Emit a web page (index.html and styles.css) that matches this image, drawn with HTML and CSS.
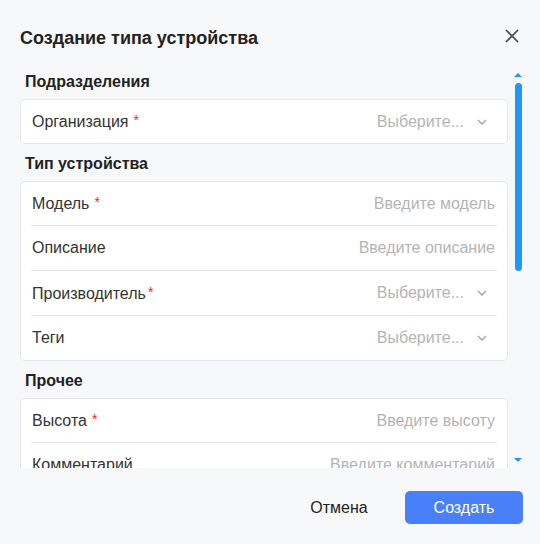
FILE: index.html
```html
<!DOCTYPE html>
<html lang="ru">
<head>
    <meta charset="UTF-8">
    <meta name="viewport" content="width=device-width, initial-scale=1.0">
    <title>Создание типа устройства</title>
    <link rel="stylesheet" href="styles.css">
</head>
<body>
    <div class="modal">
        <div class="modalHeader">
            <h1 class="modalTitle">Создание типа устройства</h1>
            <button class="closeButton" aria-label="Закрыть">
                <svg width="14" height="14" viewBox="0 0 14 14">
                    <path d="M1 1 L13 13 M13 1 L1 13" stroke="#4a4a4a" stroke-width="1.7" fill="none"/>
                </svg>
            </button>
        </div>

        <div class="modalBody">
            <div class="formScroll">
                <div class="section">
                    <div class="sectionTitle">Подразделения</div>
                    <div class="card">
                        <div class="row">
                            <span class="label">Организация<span class="required">*</span></span>
                            <span class="select">
                                <span class="placeholder">Выберите...</span>
                                <svg class="chevron" width="10" height="6" viewBox="0 0 10 6">
                                    <path d="M1 1 L5 5 L9 1" stroke="#a0a0a0" stroke-width="1.3" fill="none"/>
                                </svg>
                            </span>
                        </div>
                    </div>
                </div>

                <div class="section">
                    <div class="sectionTitle">Тип устройства</div>
                    <div class="card">
                        <div class="row">
                            <span class="label">Модель<span class="required">*</span></span>
                            <span class="placeholder">Введите модель</span>
                        </div>
                        <div class="row">
                            <span class="label">Описание</span>
                            <span class="placeholder">Введите описание</span>
                        </div>
                        <div class="row">
                            <span class="label">Производитель<span class="required tight">*</span></span>
                            <span class="select">
                                <span class="placeholder">Выберите...</span>
                                <svg class="chevron" width="10" height="6" viewBox="0 0 10 6">
                                    <path d="M1 1 L5 5 L9 1" stroke="#a0a0a0" stroke-width="1.3" fill="none"/>
                                </svg>
                            </span>
                        </div>
                        <div class="row">
                            <span class="label">Теги</span>
                            <span class="select">
                                <span class="placeholder">Выберите...</span>
                                <svg class="chevron" width="10" height="6" viewBox="0 0 10 6">
                                    <path d="M1 1 L5 5 L9 1" stroke="#a0a0a0" stroke-width="1.3" fill="none"/>
                                </svg>
                            </span>
                        </div>
                    </div>
                </div>

                <div class="section">
                    <div class="sectionTitle">Прочее</div>
                    <div class="card">
                        <div class="row">
                            <span class="label">Высота<span class="required">*</span></span>
                            <span class="placeholder">Введите высоту</span>
                        </div>
                        <div class="row">
                            <span class="label">Комментарий</span>
                            <span class="placeholder">Введите комментарий</span>
                        </div>
                    </div>
                </div>
            </div>

            <div class="scrollbar">
                <div class="arrowUp"></div>
                <div class="thumb"></div>
                <div class="arrowDown"></div>
            </div>
        </div>

        <div class="modalFooter">
            <button class="button cancelButton">Отмена</button>
            <button class="button createButton">Создать</button>
        </div>
    </div>
</body>
</html>
```

FILE: styles.css
```css
body {
    margin: 0;
    padding: 0;
    background-color: #f7f8fa;
    font-family: "Liberation Sans", Arial, sans-serif;
    color: #333;
}
.modal {
    width: 540px;
    height: 544px;
    display: flex;
    flex-direction: column;
    background-color: #f7f8fa;
}
.modalHeader {
    display: flex;
    justify-content: space-between;
    align-items: center;
    height: 62px;
    padding: 0 20px 0 20px;
    box-sizing: border-box;
}
.modalTitle {
    margin: 0;
    margin-top: 13px;
    font-size: 18px;
    line-height: 24px;
    font-weight: bold;
    color: #222;
}
.closeButton {
    border: none;
    background: none;
    padding: 0;
    margin-top: 9px;
    margin-right: 1px;
    width: 14px;
    height: 14px;
    cursor: pointer;
}
.modalBody {
    display: flex;
    height: 406px;
    overflow: hidden;
}
.formScroll {
    flex: 1;
    padding: 10px 6px 0 20px;
    overflow: hidden;
}
.section {
    margin-top: 10px;
}
.section:first-child {
    margin-top: 0;
}
.sectionTitle {
    font-size: 16px;
    line-height: 20px;
    font-weight: bold;
    color: #222;
    padding-left: 5px;
    margin-bottom: 7px;
}
.card {
    background-color: #fff;
    border: 1px solid #e6e7ea;
    border-radius: 5px;
}
.row {
    display: flex;
    justify-content: space-between;
    align-items: center;
    height: 44px;
    margin: 0 10px;
    border-top: 1px solid #e6e6e6;
    font-size: 16px;
}
.row:first-child {
    border-top: none;
    height: 43px;
}
.label {
    color: #333;
    padding-left: 1px;
}
.required {
    color: #f5222d;
    margin-left: 5px;
    font-size: 14px;
    vertical-align: 2px;
}
.required.tight {
    margin-left: 2px;
}
.placeholder {
    color: #b4b4b4;
    padding-right: 2px;
}
.select {
    display: flex;
    align-items: center;
    padding-right: 10px;
}
.select .placeholder {
    padding-right: 0;
}
.chevron {
    margin-left: 13px;
}
.scrollbar {
    width: 8px;
    margin-right: 18px;
    padding: 11px 0 3px 0;
    display: flex;
    flex-direction: column;
    align-items: center;
}
.arrowUp {
    width: 0;
    height: 0;
    border-left: 4px solid transparent;
    border-right: 4px solid transparent;
    border-bottom: 4px solid #2196f3;
}
.thumb {
    width: 7px;
    height: 188px;
    margin-top: 6px;
    background-color: #2196f3;
    border-radius: 4px;
}
.arrowDown {
    margin-top: auto;
    margin-bottom: 3px;
    width: 0;
    height: 0;
    border-left: 4px solid transparent;
    border-right: 4px solid transparent;
    border-top: 4px solid #2196f3;
}
.modalFooter {
    flex: 1;
    display: flex;
    justify-content: flex-end;
    align-items: flex-start;
    gap: 7px;
    padding: 23px 17px 0 0;
}
.button {
    width: 118px;
    height: 33px;
    font-family: "Liberation Sans", Arial, sans-serif;
    font-size: 16px;
    border: none;
    border-radius: 5px;
    cursor: pointer;
}
.cancelButton {
    background: none;
    color: #222;
}
.createButton {
    background-color: #4a7ffa;
    color: #fff;
}
```
